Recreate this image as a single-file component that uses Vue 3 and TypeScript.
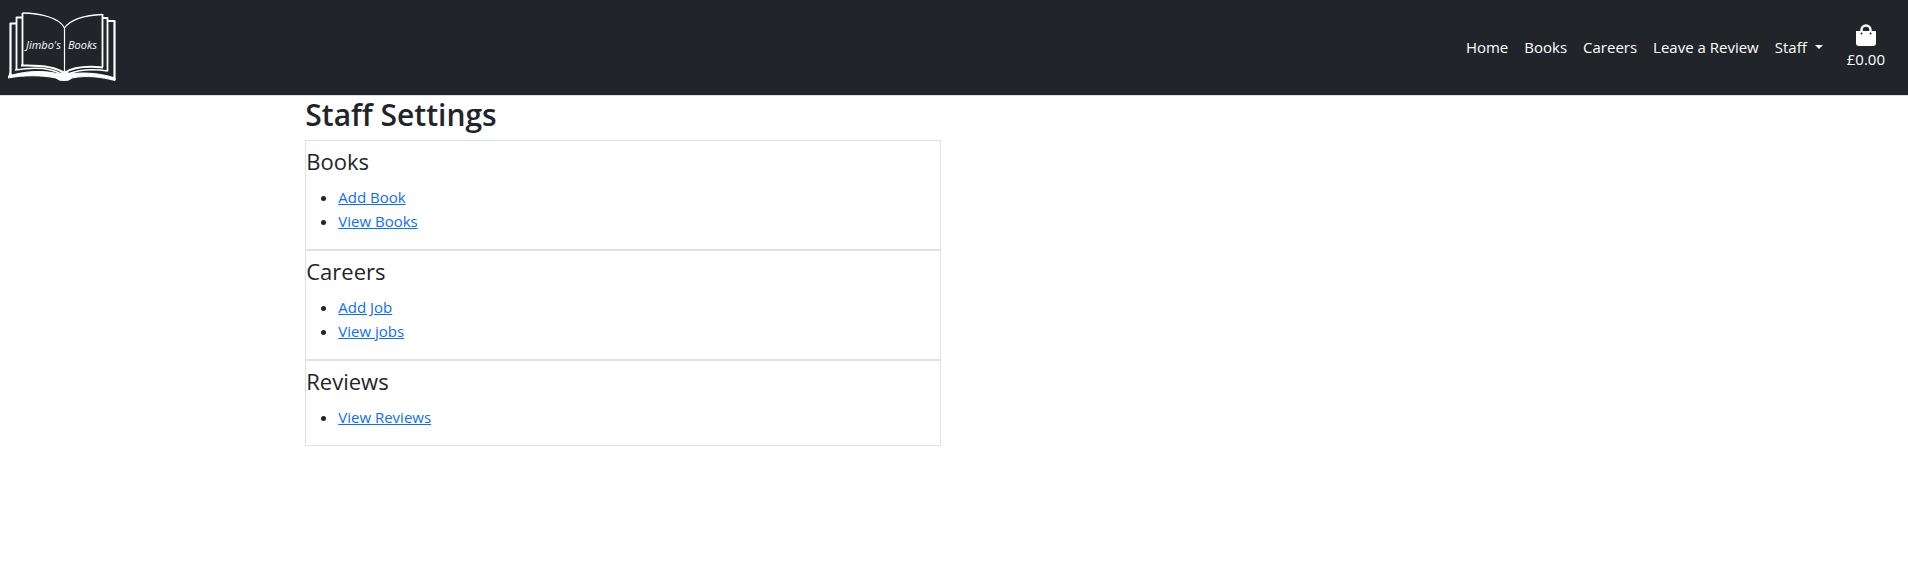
<script setup lang="ts">
interface NavItem { label: string; href: string }
interface Section { title: string; links: NavItem[] }

const navItems: NavItem[] = [
  { label: 'Home', href: '#home' },
  { label: 'Books', href: '#books' },
  { label: 'Careers', href: '#careers' },
  { label: 'Leave a Review', href: '#review' },
]

const sections: Section[] = [
  {
    title: 'Books',
    links: [
      { label: 'Add Book', href: '#add-book' },
      { label: 'View Books', href: '#view-books' },
    ],
  },
  {
    title: 'Careers',
    links: [
      { label: 'Add Job', href: '#add-job' },
      { label: 'View jobs', href: '#view-jobs' },
    ],
  },
  { title: 'Reviews', links: [{ label: 'View Reviews', href: '#view-reviews' }] },
]
</script>

<template>
  <header class="navbar">
    <a class="brand" href="#home" aria-label="Jimbo's Books">
      <svg width="110" height="78" viewBox="8 8 110 78" fill="none" stroke="#fff" stroke-linejoin="round">
        <path d="M22.500 13C40 13 60 18 64.500 28C70 20 84 15 102 14.500" stroke-width="1.300" />
        <path d="M64.500 28V73" stroke-width="1.200" />
        <path d="M22.500 13V65M102.500 14V67" stroke-width="1.800" />
        <path d="M21 65.500C38 65 55 66 64.500 73C73 67 88 66 103 67.500" stroke-width="2" />
        <path d="M22 17.500H16.500V70M102 18H107.500V71" stroke-width="1.800" />
        <path d="M15 70C34 67 51 68 61 74M68 74C80 69 95 69 108 71" stroke-width="1.500" />
        <path d="M16 23.500H10.500V75M108 21H114.500V80" stroke-width="2.200" />
        <path d="M10 73L8 78C24 75 42 75 56 78Q59 81 64 80.500Q69 81 72 78C87 75 101 77 115 80.500V78C100 73 83 72 70 74L65 71L59 74C43 70 27 71 12 75Z" fill="#fff" stroke-width="1" />
        <text x="26" y="49" class="brand-text">Jimbo's</text>
        <text x="68" y="49" class="brand-text">Books</text>
      </svg>
    </a>
    <nav class="menu" aria-label="Main">
      <a v-for="item in navItems" :key="item.label" class="nav-link" :href="item.href">{{ item.label }}</a>
      <button class="nav-link dropdown" type="button" aria-haspopup="true">Staff<span class="caret"></span></button>
      <a class="bag" href="#bag">
        <svg width="20" height="23" viewBox="0 0 20 23" aria-hidden="true">
          <path d="M5.500 8V6a4.500 4.500 0 0 1 9 0v2" fill="none" stroke="#fff" stroke-width="2.400" />
          <path d="M0 7H20V19a3 3 0 0 1-3 3H3a3 3 0 0 1-3-3Z" fill="#fff" />
          <circle cx="5.500" cy="9.500" r="1" fill="#212529" />
          <circle cx="14.500" cy="9.500" r="1" fill="#212529" />
        </svg>
        <span>£0.00</span>
      </a>
    </nav>
  </header>
  <main class="content">
    <h1>Staff Settings</h1>
    <section v-for="section in sections" :key="section.title" class="card">
      <h2>{{ section.title }}</h2>
      <ul>
        <li v-for="link in section.links" :key="link.label"><a :href="link.href">{{ link.label }}</a></li>
      </ul>
    </section>
  </main>
</template>

<style>
body {
  margin: 0;
  background: #fff;
  color: #212529;
  font: 16px/24px "Open Sans", "Noto Sans", sans-serif;
}
</style>

<style scoped>
.navbar {
  display: flex;
  align-items: center;
  justify-content: space-between;
  box-sizing: border-box;
  min-height: 96px;
  padding: 8px 23px 9px 8px;
  background: #212529;
  border-bottom: 1px solid #dee2e6;
}
.brand {
  display: flex;
}
.brand-text {
  font: italic 11px "Open Sans", "Noto Sans", sans-serif;
  fill: #fff;
  stroke: none;
}
.menu {
  display: flex;
  align-items: center;
}
.nav-link {
  padding: 8px;
  border: 0;
  background: none;
  color: #fff;
  font: 15px/24px "Open Sans", "Noto Sans", sans-serif;
  text-decoration: none;
}
.dropdown {
  display: flex;
  align-items: center;
  gap: 8px;
  cursor: pointer;
}
.caret {
  border: 4px solid transparent;
  border-top-color: #fff;
  border-bottom: 0;
}
.bag {
  display: flex;
  flex-direction: column;
  align-items: center;
  margin-left: 16px;
  color: #fff;
  font-size: 15px;
  text-decoration: none;
}
.content {
  width: 33.3333%;
  margin-left: 16%;
}
h1 {
  margin: 0 0 6px;
  font-size: 30px;
  font-weight: 600;
  line-height: 38px;
}
.card {
  padding-top: 6px;
  border: 1px solid #dee2e6;
}
h2 {
  margin: 0 0 10px;
  font-size: 22px;
  font-weight: 400;
  line-height: 28px;
}
ul {
  margin: 0 0 16px;
  padding-left: 32px;
  font-size: 15px;
}
li a {
  color: #0d6efd;
}
</style>
